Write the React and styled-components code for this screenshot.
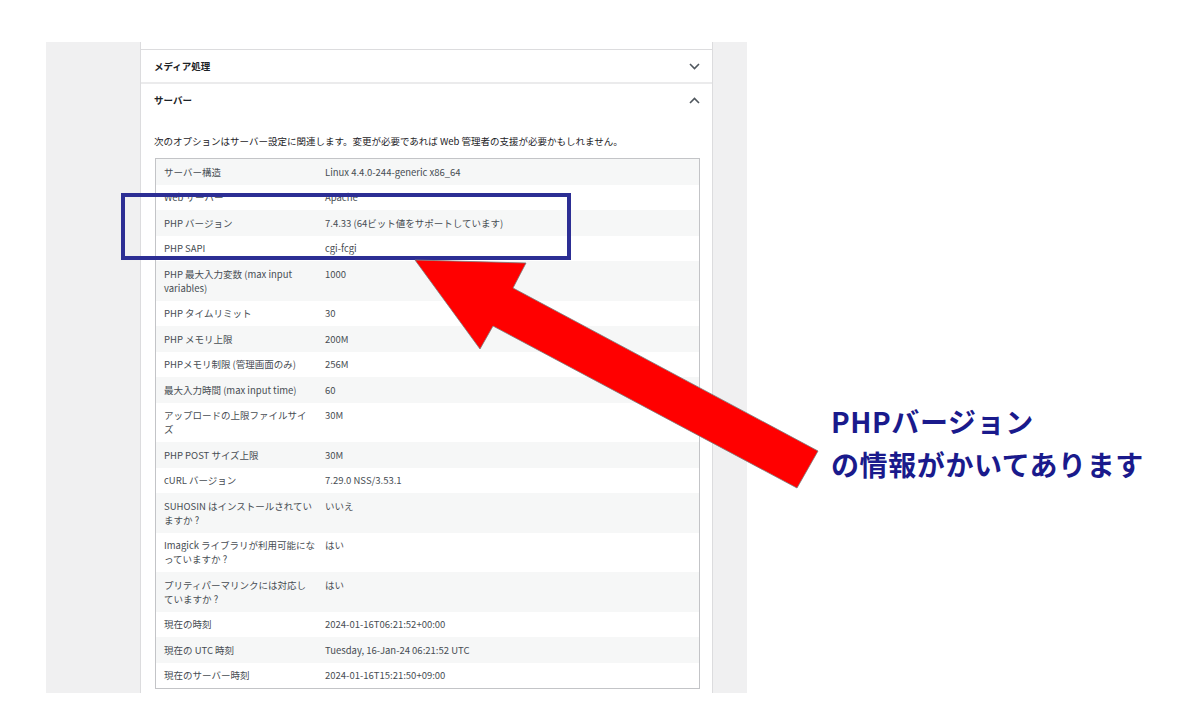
import styled, { createGlobalStyle } from "styled-components";

const GlobalStyle = createGlobalStyle`
  html, body {
    margin: 0;
    padding: 0;
    background: #ffffff;
  }
  body {
    font-family: "Noto Sans CJK JP", "Noto Sans", sans-serif;
  }
`;

// long labels break where the admin screen breaks them
const serverInfo = [
  ["サーバー構造", "Linux 4.4.0-244-generic x86_64"],
  ["Web サーバー", "Apache"],
  ["PHP バージョン", "7.4.33 (64ビット値をサポートしています)"],
  ["PHP SAPI", "cgi-fcgi"],
  ["PHP 最大入力変数 (max input\nvariables)", "1000"],
  ["PHP タイムリミット", "30"],
  ["PHP メモリ上限", "200M"],
  ["PHPメモリ制限 (管理画面のみ)", "256M"],
  ["最大入力時間 (max input time)", "60"],
  ["アップロードの上限ファイルサイ\nズ", "30M"],
  ["PHP POST サイズ上限", "30M"],
  ["cURL バージョン", "7.29.0 NSS/3.53.1"],
  ["SUHOSIN はインストールされてい\nますか ?", "いいえ"],
  ["Imagick ライブラリが利用可能にな\nっていますか ?", "はい"],
  ["プリティパーマリンクには対応し\nていますか ?", "はい"],
  ["現在の時刻", "2024-01-16T06:21:52+00:00"],
  ["現在の UTC 時刻", "Tuesday, 16-Jan-24 06:21:52 UTC"],
  ["現在のサーバー時刻", "2024-01-16T15:21:50+09:00"],
];

const Page = styled.div`
  position: relative;
  width: 1191px;
  height: 726px;
  padding: 42px 0 0 46px;
  box-sizing: border-box;
  overflow: hidden;
`;

const AdminArea = styled.div`
  width: 701px;
  height: 651px;
  background: #f0f0f1;
  display: flex;
  padding-left: 94px;
  box-sizing: border-box;
`;

const Card = styled.div`
  width: 573px;
  background: #ffffff;
  border-left: 1px solid #dcdcde;
  border-right: 1px solid #dcdcde;
  box-sizing: border-box;
  padding-top: 7px;
  overflow: hidden;
`;

const Section = styled.div`
  border-top: ${(p) => (p.$first ? "1px solid #dcdcde" : "2px solid #ebebec")};
`;

const SectionHeader = styled.div`
  height: 32px;
  display: flex;
  align-items: center;
  justify-content: space-between;
  padding: 0 12px 0 13px;
  font-size: 9.5px;
  font-weight: 700;
  color: #1d2327;
`;

const SectionBody = styled.div`
  padding: 19px 14px 0 13px;
`;

const Description = styled.p`
  margin: 0 0 10px;
  font-size: 9.5px;
  line-height: 13px;
  color: #1d2327;
`;

const InfoTable = styled.table`
  width: 545px;
  border: 1px solid #c3c4c7;
  border-collapse: collapse;
  table-layout: fixed;
  margin-left: 1px;
`;

const Row = styled.tr`
  background: ${(p) => (p.$striped ? "#f6f7f7" : "#ffffff")};
`;

const Cell = styled.td`
  padding: 5.75px ${(p) => (p.$label ? "1px" : "8px")} 5.75px 8px;
  font-size: 9.5px;
  line-height: 14px;
  color: #474d53;
  vertical-align: top;
  white-space: ${(p) => (p.$label ? "pre-line" : "normal")};
  width: ${(p) => (p.$label ? "152px" : "auto")};
`;

const Highlight = styled.div`
  position: absolute;
  left: 121px;
  top: 193px;
  width: 450px;
  height: 67px;
  border: 4px solid #2c2e94;
  box-sizing: border-box;
`;

const ArrowLayer = styled.svg`
  position: absolute;
  left: 0;
  top: 0;
  pointer-events: none;
`;

const Note = styled.div`
  position: absolute;
  left: 831px;
  top: 400px;
  font-size: 28px;
  line-height: 43px;
  letter-spacing: 0.6px;
  font-weight: 700;
  color: #1a1a8c;
  white-space: nowrap;
`;

const Chevron = ({ up }) => (
  <svg width="11" height="7" viewBox="0 0 11 7">
    <polyline
      points={up ? "1,6 5.5,1.5 10,6" : "1,1 5.5,5.5 10,1"}
      fill="none"
      stroke="#50575e"
      strokeWidth="1.6"
    />
  </svg>
);

const App = () => {
  return (
    <Page>
      <GlobalStyle />
      <AdminArea>
        <Card>
          <Section $first>
            <SectionHeader>
              メディア処理
              <Chevron />
            </SectionHeader>
          </Section>
          <Section>
            <SectionHeader>
              サーバー
              <Chevron up />
            </SectionHeader>
            <SectionBody>
              <Description>
                次のオプションはサーバー設定に関連します。変更が必要であれば Web 管理者の支援が必要かもしれません。
              </Description>
              <InfoTable>
                <tbody>
                  {serverInfo.map(([label, value], i) => (
                    <Row key={label} $striped={i % 2 === 0}>
                      <Cell $label>{label}</Cell>
                      <Cell>{value}</Cell>
                    </Row>
                  ))}
                </tbody>
              </InfoTable>
            </SectionBody>
          </Section>
        </Card>
      </AdminArea>

      <Highlight />
      <ArrowLayer width="1191" height="726" viewBox="0 0 1191 726">
        <polygon
          points="480,349 415,260 526,263 513,288 818,451 797,488 493,326"
          fill="#ff0000"
          stroke="#7a7a7a"
          strokeWidth="0.8"
          strokeLinejoin="miter"
        />
      </ArrowLayer>
      <Note>
        PHPバージョン
        <br />
        の情報がかいてあります
      </Note>
    </Page>
  );
};

export default App;
